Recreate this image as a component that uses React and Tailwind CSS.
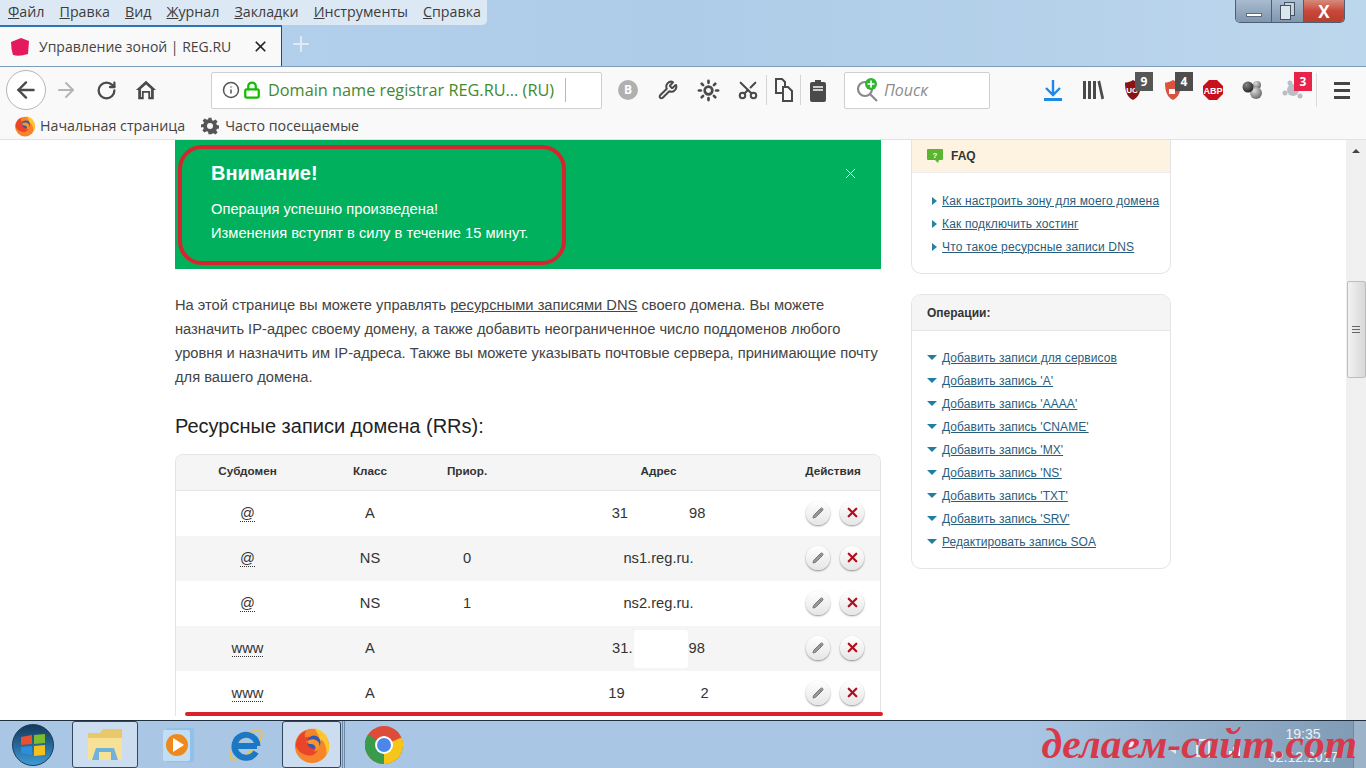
import React from 'react';
import { ArrowLeft, ArrowRight, RotateCw, Info, Lock, Wrench, Scissors, Plus, X, Pencil, Sun } from 'lucide-react';

const faq = ['Как настроить зону для моего домена', 'Как подключить хостинг', 'Что такое ресурсные записи DNS'];
const ops = [
  'Добавить записи для сервисов',
  "Добавить запись 'A'",
  "Добавить запись 'AAAA'",
  "Добавить запись 'CNAME'",
  "Добавить запись 'MX'",
  "Добавить запись 'NS'",
  "Добавить запись 'TXT'",
  "Добавить запись 'SRV'",
  'Редактировать запись SOA',
];
const menu = [
  ['Ф', 'айл'],
  ['П', 'равка'],
  ['В', 'ид'],
  ['Ж', 'урнал'],
  ['З', 'акладки'],
  ['И', 'нструменты'],
  ['С', 'правка'],
];

const FirefoxLogo = ({ size }) => (
  <svg width={size} height={size} viewBox="0 0 40 40">
    <circle cx="20" cy="21" r="18" fill="#f7842a" />
    <path d="M22 2c9 2 16 9 16 19 0 4-1 7-3 10 1-6-1-13-5-17 0 2-1 3-2 3 0-5-2-11-6-15z" fill="#ffc62b" />
    <path d="M3 21C3 12 9 6 14 5c-2 3-2 5-1 7 2-1 5-1 7 0-3 1-6 3-6 5 3 4 9 1 12 5 1 5-4 10-10 9C9 30 5 26 3 21z" fill="#e8452b" />
    <circle cx="22" cy="17" r="7" fill="#3a57b0" />
    <path d="M15 16c3-3 9-3 12 1 2 4 0 9-5 10 3-3 2-7-2-8-3 0-4 0-5-3z" fill="#f9952c" />
  </svg>
);

const Gear = ({ size, color }) => (
  <svg width={size} height={size} viewBox="0 0 24 24" fill={color}>
    <path d="M10 1h4l.6 3.2 2 .8L19.300 3.200l2.800 2.800-1.800 2.700.8 2 3.200.6v4l-3.200.6-.8 2 1.800 2.700-2.800 2.800-2.700-1.800-2 .8L14 23h-4l-.6-3.200-2-.8-2.700 1.800-2.800-2.800 1.800-2.700-.8-2L0 14v-4l3.200-.6.8-2L2.200 4.700 5 2 7.700 3.800l2-.8z" />
    <circle cx="12" cy="12" r="4" fill="#f9f9fa" />
  </svg>
);

const Shield = ({ fill, children }) => (
  <svg width="18" height="22" viewBox="0 0 18 22">
    <path d="M9 1 C6 3 3 3.500 1 3.500 C1 12 3 18 9 21 C15 18 17 12 17 3.500 C15 3.500 12 3 9 1z" fill={fill} />
    {children}
  </svg>
);

const Badge = ({ value, color, left }) => (
  <span className={`absolute -top-[2px] ${left} w-[18px] h-[19px] flex items-center justify-center text-[12px] font-bold text-white ${color}`}>{value}</span>
);

const Tool = ({ children }) => <div className="relative w-10 h-8 flex items-center justify-center">{children}</div>;

const ToolSep = () => <div className="w-px h-[30px] bg-[#d4d4d4]" />;

const Chrome = () => (
  <div className="h-[66px] bg-gradient-to-r from-[#b4d0ec] via-[#aecce8] to-[#bcd6ec] flex flex-col relative font-['Open_Sans',sans-serif]">
    <div className="h-[25px] flex">
      <div className="w-[487px] h-[25px] bg-[#dce9f5] rounded-br-[5px] flex items-center pl-2 gap-[15px] text-[14.25px] leading-none text-[#3c3c3c]">
        {menu.map(([a, b]) => (
          <span key={b}><u>{a}</u>{b}</span>
        ))}
      </div>
      <div className="ml-auto mr-[21px] w-[110px] h-[23px] flex rounded-b-[5px] border border-t-0 border-[#4c5f74] overflow-hidden">
        <div className="w-[35px] bg-gradient-to-b from-[#a9bccf] to-[#7f96ad] flex items-center justify-center">
          <div className="w-[16px] h-[4px] mt-[7px] bg-white border border-[#5c6c7c]" />
        </div>
        <div className="relative w-[33px] border-x border-[#4c5f74] bg-gradient-to-b from-[#a9bccf] to-[#7f96ad]">
          <div className="absolute left-[12px] top-[2px] w-[11px] h-[14px] bg-[#c5d3e0] border border-[#44525f]" />
          <div className="absolute left-[8px] top-[5px] w-[11px] h-[15px] bg-[#dbe5ee] border border-[#44525f]" />
        </div>
        <div className="flex-1 bg-gradient-to-b from-[#d5897c] via-[#c9463a] to-[#b6402f] flex items-center justify-center text-white font-bold text-[17px] leading-none">X</div>
      </div>
    </div>
    <div className="flex-1 flex border-b border-[#7f9cb8]">
      <div className="w-[282px] h-[41px] bg-[#f9f9fa] border-t-2 border-r border-t-[#2f74b5] border-r-[#2b4a6b] flex items-center pl-[10px] text-[14px] text-[#444]">
        <svg width="21" height="20" viewBox="0 0 21 20" className="shrink-0">
          <path d="M1 5 L11 1 L19 4 L18 17 Q9 20 3 18 Q1 12 1 5z" fill="#e5195f" />
        </svg>
        <span className="ml-2 whitespace-nowrap">Управление зоной | REG.RU</span>
        <X size={17} strokeWidth={2.4} className="ml-auto mr-[12px] text-[#222]" />
      </div>
      <Plus size={24} strokeWidth={2.2} className="text-[#dfeaf5] ml-[7px] mt-[7px]" />
    </div>
  </div>
);

const Toolbar = () => (
  <div className="h-[46px] pt-[2px] bg-[#f9f9fa] flex items-center text-[#4a4a4a] font-['Open_Sans',sans-serif]">
    <div className="ml-[6px] w-10 h-10 rounded-full border border-[#b5b5b5] bg-white flex items-center justify-center">
      <ArrowLeft size={26} strokeWidth={2.2} />
    </div>
    <ArrowRight size={24} strokeWidth={2} className="ml-[8px] text-[#b5b5b5]" />
    <RotateCw size={21} strokeWidth={2.6} className="ml-[18px]" />
    <svg width="22" height="22" viewBox="0 0 24 24" className="ml-[18px]" fill="#4a4a4a">
      <path d="M12 2 L23 12 L20.500 12 L20.500 22 L14.500 22 L14.500 15 L9.500 15 L9.500 22 L3.500 22 L3.500 12 L1 12z M12 6 L6.500 11 L6.500 19.500 L7.500 19.500 L7.500 13 L16.500 13 L16.500 19.500 L17.500 19.500 L17.500 11z" fillRule="evenodd" />
    </svg>
    <div className="ml-[54px] w-[391px] h-[37px] shrink-0 bg-white border border-[#cfcfcf] rounded-[2px] flex items-center pl-[10px]">
      <Info size={18} className="text-[#555]" />
      <Lock size={18} strokeWidth={3} className="ml-[3px] text-[#12bc00]" />
      <span className="ml-[7px] text-[16.3px] text-[#3f8a2e] whitespace-nowrap">Domain name registrar REG.RU... (RU)</span>
      <div className="ml-[11px] w-px h-[24px] bg-[#9fc79a]" />
    </div>
    <div className="ml-[6px] flex items-center">
      <Tool>
        <div className="w-5 h-5 rounded-full bg-[#b0b0b0] flex items-center justify-center text-white text-[12px] font-bold">B</div>
      </Tool>
      <Tool><Wrench size={20} strokeWidth={2.4} /></Tool>
      <Tool><Sun size={23} strokeWidth={2.8} /></Tool>
      <Tool><Scissors size={22} strokeWidth={2.2} className="-rotate-90" /></Tool>
      <div className="ml-[-2px]"><ToolSep /></div>
      <div className="w-[33px] flex justify-center">
        <svg width="20" height="24" viewBox="0 0 20 24" fill="none" stroke="#4a4a4a" strokeWidth="2">
          <path d="M2 1h6l3 3v11H2z" />
          <path d="M9 9h5l4 4v10H9z" fill="#f9f9fa" />
        </svg>
      </div>
      <ToolSep />
      <div className="w-[33px] flex justify-center">
        <svg width="16" height="24" viewBox="0 0 16 24">
          <path d="M5 2h6v2h3a2 2 0 012 2v16a2 2 0 01-2 2H2a2 2 0 01-2-2V6a2 2 0 012-2h3z" fill="#4a4a4a" />
          <path d="M3 9h10M3 12h10" stroke="#f9f9fa" strokeWidth="1.500" />
        </svg>
      </div>
    </div>
    <div className="ml-[10px] w-[146px] h-[37px] shrink-0 bg-white border border-[#cfcfcf] rounded-[2px] flex items-center pl-[10px] relative">
      <svg width="24" height="24" viewBox="0 0 24 24" fill="none" stroke="#8a8a8a" strokeWidth="2.200">
        <circle cx="10" cy="11" r="7" />
        <path d="M15 16l7 7" />
      </svg>
      <span className="absolute left-[20px] top-[5px] w-[12px] h-[12px] rounded-full bg-[#2fb52f] text-white flex items-center justify-center"><Plus size={10} strokeWidth={4} /></span>
      <span className="ml-[5px] text-[16px] italic text-[#8c8c8c]">Поиск</span>
    </div>
    <div className="ml-[43px] flex items-center">
      <Tool>
        <svg width="20" height="22" viewBox="0 0 20 22" fill="none" stroke="#1e88e5" strokeWidth="2.400">
          <path d="M10 1v14M3 9l7 7 7-7" />
          <path d="M1 20.500h18" strokeWidth="3" />
        </svg>
      </Tool>
      <Tool>
        <svg width="22" height="20" viewBox="0 0 22 20" fill="#4a4a4a">
          <rect x="1" y="1" width="3" height="18" />
          <rect x="6" y="1" width="3" height="18" />
          <rect x="11" y="1" width="3" height="18" />
          <path d="M15.500 1.500l2.600-1 4 18-2.600 1z" />
        </svg>
      </Tool>
      <Tool>
        <Shield fill="#8a1414">
          <text x="8" y="14" textAnchor="middle" fontSize="8" fontWeight="bold" fill="#fff" fontFamily="Liberation Sans">UC</text>
        </Shield>
        <Badge value="9" color="bg-[#565656]" left="left-[22px]" />
      </Tool>
      <Tool>
        <Shield fill="#d9533f">
          <rect x="5" y="10" width="6" height="5" fill="#fff" />
        </Shield>
        <Badge value="4" color="bg-[#4e4e4e]" left="left-[22px]" />
      </Tool>
      <Tool>
        <svg width="22" height="22" viewBox="0 0 22 22">
          <path d="M7 1h8l6 6v8l-6 6H7l-6-6V7z" fill="#c8101c" />
          <text x="11" y="14.500" textAnchor="middle" fontSize="9" fontWeight="bold" fill="#fff" fontFamily="Liberation Sans">ABP</text>
        </svg>
      </Tool>
      <Tool>
        <svg width="22" height="20" viewBox="0 0 22 20">
          <defs>
            <radialGradient id="ballDark" cx="35%" cy="30%" r="75%">
              <stop offset="0%" stopColor="#888" />
              <stop offset="100%" stopColor="#222" />
            </radialGradient>
            <radialGradient id="ballLight" cx="35%" cy="30%" r="75%">
              <stop offset="0%" stopColor="#ddd" />
              <stop offset="100%" stopColor="#666" />
            </radialGradient>
          </defs>
          <circle cx="15" cy="5" r="4" fill="url(#ballLight)" />
          <circle cx="14" cy="13" r="6" fill="url(#ballLight)" />
          <circle cx="6" cy="7" r="5.500" fill="url(#ballDark)" />
        </svg>
      </Tool>
      <Tool>
        <svg width="22" height="20" viewBox="0 0 22 20" fill="#b9bec6">
          <circle cx="11" cy="10" r="6" />
          <circle cx="3" cy="13" r="2.500" />
          <circle cx="18" cy="16" r="2.500" />
          <circle cx="8" cy="3" r="2.500" />
        </svg>
        <Badge value="3" color="bg-[#e8234a]" left="left-[21px]" />
      </Tool>
    </div>
    <div className="ml-[3px] w-px h-[34px] bg-[#dcdcdc]" />
    <div className="ml-[17px] flex flex-col gap-[4px]">
      <div className="w-[16px] h-[3px] bg-[#444]" />
      <div className="w-[16px] h-[3px] bg-[#444]" />
      <div className="w-[16px] h-[3px] bg-[#444]" />
    </div>
  </div>
);

const Bookmarks = () => (
  <div className="h-[28px] pt-[1px] bg-[#f9f9fa] border-b border-[#e2e2e2] flex items-center pl-[14px] text-[14.25px] text-[#444] font-['Open_Sans',sans-serif]">
    <FirefoxLogo size={22} />
    <span className="ml-[4px]">Начальная страница</span>
    <div className="ml-[16px]"><Gear size={18} color="#555" /></div>
    <span className="ml-[6px]">Часто посещаемые</span>
  </div>
);

const RowActions = () => (
  <div className="flex gap-[10px] pl-[2px] pb-[2px]">
    <div className="w-6 h-6 rounded-full bg-gradient-to-b from-white to-[#e6e6e6] shadow-[0_1px_2px_rgba(0,0,0,0.45)] flex items-center justify-center">
      <Pencil size={12} fill="#999" className="text-[#777]" />
    </div>
    <div className="w-6 h-6 rounded-full bg-gradient-to-b from-white to-[#e6e6e6] shadow-[0_1px_2px_rgba(0,0,0,0.45)] flex items-center justify-center">
      <X size={15} strokeWidth={3.6} className="text-[#b0101c]" />
    </div>
  </div>
);

const Row = ({ sub, cls, prio, shaded, children }) => (
  <div className={`h-[45px] grid grid-cols-[143px_102px_92px_291px_78px] items-center text-center text-[14.7px] text-[#333] ${shaded ? 'bg-[#f5f5f5]' : 'bg-white'}`}>
    <div><span className="border-b border-dotted border-[#333]">{sub}</span></div>
    <div>{cls}</div>
    <div>{prio}</div>
    <div className="flex justify-center items-center">{children}</div>
    <RowActions />
  </div>
);

const RecordsTable = () => (
  <div className="mt-[15px] border border-b-0 border-[#e4e4e4] rounded-t-[8px] overflow-hidden">
    <div className="h-[36px] pb-[3px] bg-[#f5f5f5] border-b border-[#e4e4e4] grid grid-cols-[143px_102px_92px_291px_78px] items-center text-center text-[11.7px] font-bold text-[#333]">
      <div>Субдомен</div>
      <div>Класс</div>
      <div>Приор.</div>
      <div>Адрес</div>
      <div className="pr-[20px] whitespace-nowrap">Действия</div>
    </div>
    <Row sub="@" cls="A">
      <span>31</span><span className="ml-[61px]">98</span>
    </Row>
    <Row sub="@" cls="NS" prio="0" shaded>ns1.reg.ru.</Row>
    <Row sub="@" cls="NS" prio="1">ns2.reg.ru.</Row>
    <Row sub="www" cls="A" shaded>
      <span>31.</span><span className="w-[54px] h-[38px] bg-white rounded-[3px] mx-px" /><span>98</span>
    </Row>
    <Row sub="www" cls="A">
      <span>19</span><span className="ml-[76px]">2</span>
    </Row>
  </div>
);

const Panel = ({ title, head, rounded, children }) => (
  <div className={`border border-[#e4e4e4] rounded-b-[10px] ${rounded ? 'rounded-t-[10px]' : 'border-t-0'} overflow-hidden`}>
    <div className={head}>{title}</div>
    {children}
  </div>
);

const LinkRow = ({ label, marker, wide }) => (
  <div className="h-[23px] flex items-center text-[12px] text-[#2a5d7c]">
    <div className="w-[30px] flex justify-end pr-[5px] shrink-0">{marker}</div>
    <span className={`underline whitespace-nowrap ${wide ? 'tracking-[0.16px]' : 'tracking-[0.06px]'}`}>{label}</span>
  </div>
);

const Page = () => (
  <div className="relative flex-1 min-h-0 bg-white flex overflow-hidden font-['Liberation_Sans',sans-serif]">
    <div className="ml-[175px] w-[706px] shrink-0">
      <div className="relative h-[129px] bg-[#00b05c] text-white pl-[36px] pt-[20px]">
        <div className="text-[20px] font-bold leading-[26px]">Внимание!</div>
        <div className="mt-[11px] text-[14.7px] leading-[24px]">Операция успешно произведена!</div>
        <div className="text-[14.7px] leading-[24px]">Изменения вступят в силу в течение 15 минут.</div>
        <X size={17} strokeWidth={1.4} className="absolute right-[22px] top-[25px] text-[#e6f8ee]" />
      </div>
      <p className="mt-[24px] text-[14.7px] leading-[24px] text-[#444] whitespace-nowrap">
        На этой странице вы можете управлять <span className="underline">ресурсными записями DNS</span> своего домена. Вы можете<br />
        назначить IP-адрес своему домену, а также добавить неограниченное число поддоменов любого<br />
        уровня и назначить им IP-адреса. Также вы можете указывать почтовые сервера, принимающие почту<br />
        для вашего домена.
      </p>
      <h2 className="mt-[24px] text-[20px] leading-[26px] text-[#222]">Ресурсные записи домена (RRs):</h2>
      <RecordsTable />
    </div>

    <div className="ml-[30px] w-[260px] shrink-0 flex flex-col gap-[21px]">
      <Panel
        title={
          <>
            <svg width="16" height="14" viewBox="0 0 16 14" className="mr-[8px]">
              <path d="M1 0h14a1 1 0 011 1v9a1 1 0 01-1 1h-3l-1 3-3-3H1a1 1 0 01-1-1V1a1 1 0 011-1z" fill="#5cb531" />
              <text x="8" y="8.500" textAnchor="middle" fontSize="8" fontWeight="bold" fill="#fff">?</text>
            </svg>
            FAQ
          </>
        }
        head="h-[33px] bg-[#fdf3e0] border-b border-[#ececec] flex items-center pl-[15px] text-[12px] font-bold text-[#333]"
      >
        <div className="pt-[16px] pb-[15px]">
          {faq.map((t) => (
            <LinkRow key={t} wide label={t} marker={<span className="w-0 h-0 border-y-[4px] border-y-transparent border-l-[5px] border-l-[#2a7fa5]" />} />
          ))}
        </div>
      </Panel>
      <div className="-mt-[1px]">
        <Panel
          rounded
          title="Операции:"
          head="h-[36px] bg-[#f5f5f5] border-b border-[#e4e4e4] flex items-center pl-[15px] text-[12px] font-bold text-[#333]"
        >
          <div className="pt-[15px] pb-[15px]">
            {ops.map((t) => (
              <LinkRow key={t} label={t} marker={<span className="w-0 h-0 border-x-[5px] border-x-transparent border-t-[5px] border-t-[#1f7fa3]" />} />
            ))}
          </div>
        </Panel>
      </div>
    </div>

    <div className="ml-auto w-[20px] bg-[#f0f0f0] flex flex-col items-center">
      <div className="mt-[9px] w-0 h-0 border-x-[4px] border-x-transparent border-b-[4px] border-b-[#444]" />
      <div className="mt-[128px] w-[19px] h-[97px] bg-gradient-to-r from-[#f2f2f2] to-[#d8d8d8] border border-[#bdbdbd] rounded-[2px] flex flex-col items-center justify-center gap-[2px]">
        <div className="w-[8px] h-px bg-[#666]" />
        <div className="w-[8px] h-px bg-[#666]" />
        <div className="w-[8px] h-px bg-[#666]" />
      </div>
    </div>

    {/* red annotation marks on top of the page */}
    <div className="absolute left-[178px] top-[5px] w-[388px] h-[120px] border-[4px] border-[#d3262e] rounded-[24px]" />
    <div className="absolute left-[185px] top-[572px] w-[698px] h-[4px] bg-[#d8232f] rounded-full" />
  </div>
);

const TaskButton = ({ active, width, children }) => (
  <div className={`h-[47px] flex items-center justify-center ${width} ${active ? 'bg-[#d3e2f1]/80 border border-[#33475c] rounded-[3px]' : ''}`}>{children}</div>
);

const Taskbar = () => (
  <div className="relative h-[48px] border-t border-[#1f2f40] bg-gradient-to-r from-[#a9c7e5] via-[#a9c7e5] via-75% to-[#7f9ab3] flex items-center">
    <div className="ml-[12px] w-[42px] h-[42px] rounded-full bg-gradient-to-b from-[#14395c] to-[#3d9bd6] border border-[#1c3c58] flex items-center justify-center">
      <svg width="26" height="24" viewBox="0 0 26 24">
        <path d="M1 4 L12 2 L12 11 L1 12z" fill="#e8502f" />
        <path d="M14 2 L25 1 L25 10 L14 11z" fill="#7cbb2b" />
        <path d="M1 14 L12 13 L12 22 L1 20z" fill="#2b8fe0" />
        <path d="M14 13 L25 12 L25 22 L14 23z" fill="#f4c01e" />
      </svg>
    </div>
    <div className="ml-[18px]">
      <TaskButton active width="w-[66px]">
        <svg width="40" height="38" viewBox="0 0 40 38">
          <path d="M3 7h12l3-4h19v30H3z" fill="#e8c868" />
          <path d="M3 12h34v22H3z" fill="#f6e197" />
          <path d="M11 22h18l4 12H7z" fill="#6fb3dc" />
          <path d="M14 26h12v8H14z" fill="#f6e197" />
        </svg>
      </TaskButton>
    </div>
    <div className="ml-[21px] w-[40px] flex justify-center">
      <svg width="34" height="36" viewBox="0 0 34 36">
        <rect x="4" y="1" width="28" height="34" rx="2" fill="#8fc1ea" />
        <rect x="1" y="3" width="27" height="31" rx="2" fill="#c3def3" />
        <circle cx="15" cy="18" r="11" fill="#ee8a1d" />
        <path d="M11 11l11 7-11 7z" fill="#fff" />
      </svg>
    </div>
    <div className="ml-[27px] w-[40px] flex justify-center">
      <svg width="40" height="40" viewBox="0 0 40 40" fill="none">
        <ellipse cx="20" cy="20" rx="20" ry="8" transform="rotate(-42 20 20)" stroke="#e6c25a" strokeWidth="2" />
        <path d="M9 21h22M30 27a11.500 11.500 0 1 1 1.500-6" stroke="#1b78c4" strokeWidth="6" />
      </svg>
    </div>
    <div className="ml-[16px] flex">
      <TaskButton active width="w-[59px]"><FirefoxLogo size={38} /></TaskButton>
      <div className="w-[2px] h-[47px] border-r border-[#6e8aa6]" />
      <div className="w-[2px] h-[47px] border-r border-[#6e8aa6]" />
    </div>
    <div className="ml-[20px]">
      <svg width="38" height="38" viewBox="0 0 38 38">
        <circle cx="19" cy="19" r="19" fill="#dd4b39" />
        <path d="M19 19L36.500 11.500A19 19 0 0 1 19 38z" fill="#f5c518" />
        <path d="M19 19L19 38A19 19 0 0 1 3 8.500z" fill="#3a9b4a" />
        <circle cx="19" cy="19" r="9" fill="#fff" />
        <circle cx="19" cy="19" r="7" fill="#4b87e8" />
      </svg>
    </div>

    {/* tray icons, mostly covered by the watermark */}
    <div className="absolute left-[1125px] top-[18px] flex items-center">
      <svg width="125" height="20" viewBox="0 0 125 20" fill="#fff">
        <path d="M2 3h8l2 2v3H2z" opacity="0.8" />
        <path d="M45 11l6-4v8z" opacity="0.7" />
        <rect x="72" y="1" width="12" height="16" fill="none" stroke="#fff" strokeWidth="1.500" />
        <rect x="104" y="12" width="3" height="5" />
        <rect x="108" y="8" width="3" height="9" />
        <rect x="112" y="4" width="3" height="13" />
      </svg>
    </div>
    <div className="absolute left-[1268px] w-[70px] top-[6px] text-center text-[14px] leading-none text-white/85 font-['Liberation_Sans',sans-serif]">19:35</div>
    <div className="absolute left-[1268px] w-[70px] top-[29px] text-center text-[14px] leading-none text-white/85 font-['Liberation_Sans',sans-serif]">02.12.2017</div>
    <div className="absolute right-0 top-0 bottom-0 w-[13px] bg-[#9db4c8] border-l border-[#6e8aa6]" />
    <div className="absolute right-[9px] top-[-2px] text-[41.5px] leading-[50px] italic font-bold text-[#d8394a] font-['Liberation_Serif',serif] whitespace-nowrap">делаем-сайт.com</div>
  </div>
);

export default function App() {
  return (
    <div className="w-[1366px] h-[768px] flex flex-col overflow-hidden">
      <Chrome />
      <Toolbar />
      <Bookmarks />
      <Page />
      <Taskbar />
    </div>
  );
}
